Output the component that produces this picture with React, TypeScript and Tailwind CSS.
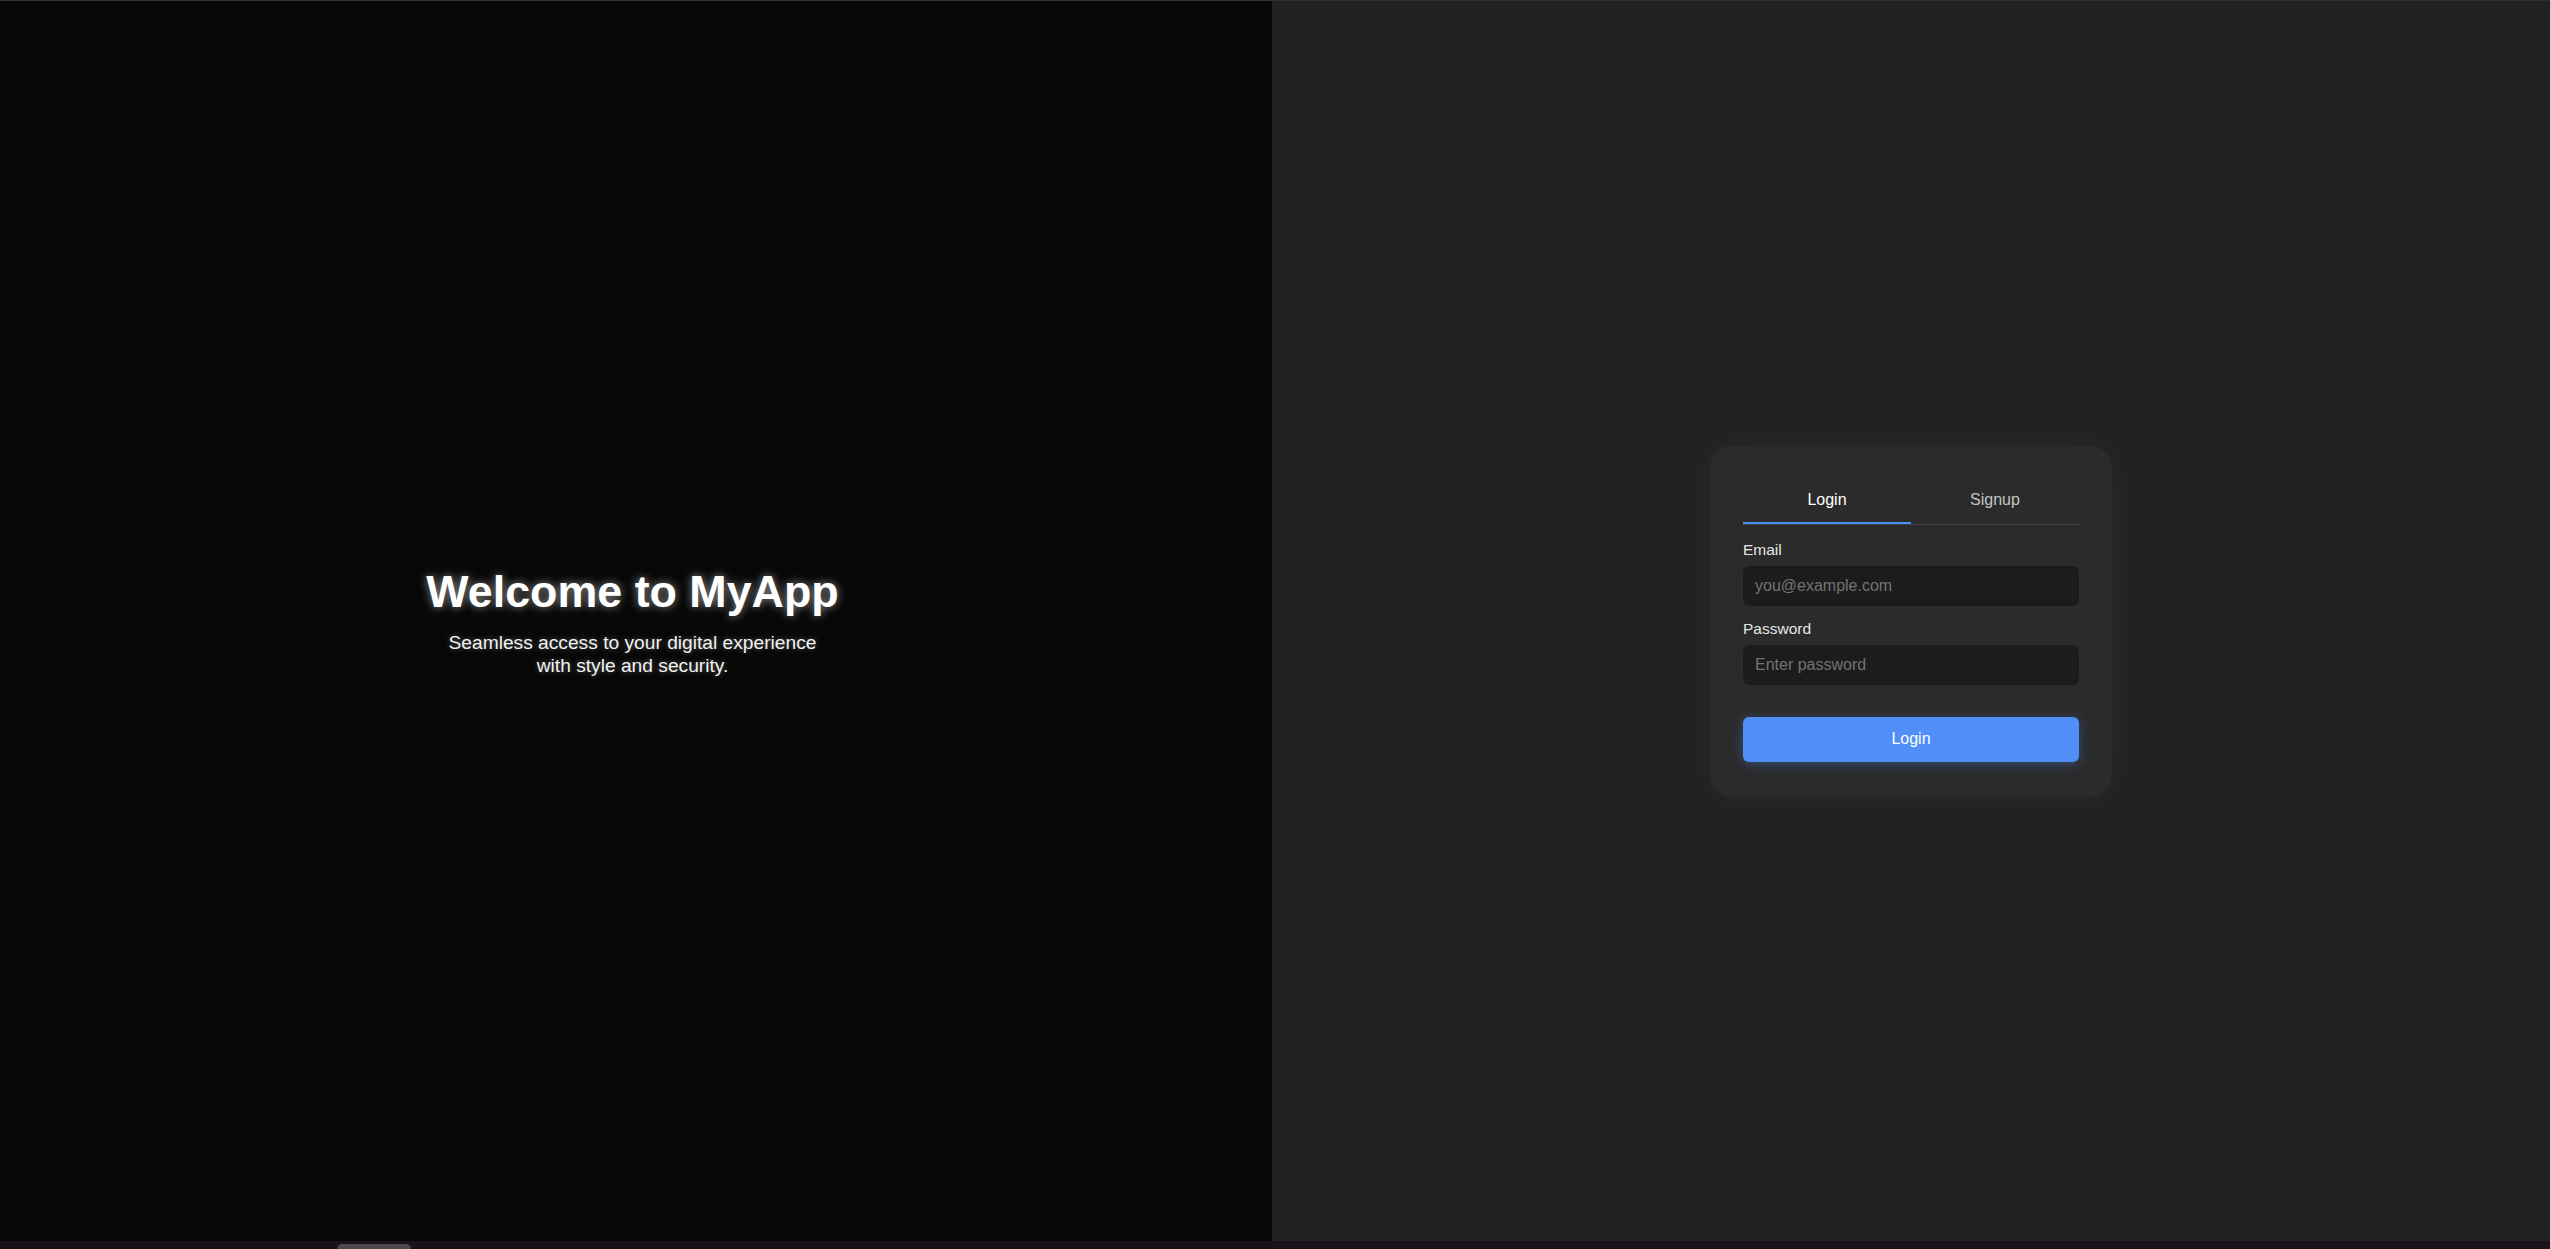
import React, { useState } from 'react';

const App: React.FC = () => {
    const [tab, setTab] = useState<'login' | 'signup'>('login');

    return (
        <div className="h-screen flex flex-col bg-[#070707] font-['Liberation_Sans',Arial,sans-serif] overflow-hidden">
            <div className="h-px bg-[#2f2f2f]"></div>
            <div className="flex-1 flex min-h-0">
                {/* intro side */}
                <div className="w-[1272px] bg-[#070707] flex flex-col items-center justify-center text-center text-white pr-[7px]">
                    <h1 className="text-[2.8rem] leading-[52px] font-bold mb-[14px] [text-shadow:0_0_10px_rgba(255,255,255,0.55)]">
                        Welcome to MyApp
                    </h1>
                    <p className="text-[1.2rem] leading-[23px] max-w-[400px] text-[#f2f2f2] [text-shadow:0_0_6px_rgba(255,255,255,0.35)]">
                        Seamless access to your digital experience with style and security.
                    </p>
                </div>

                {/* auth side */}
                <div className="flex-1 bg-[#212121] flex items-center justify-center">
                    <div className="w-[402px] bg-[#2b2b2b] rounded-[22px] pl-[33px] pr-[33px] pt-8 pb-[35px] shadow-[0_0_36px_rgba(255,255,255,0.05)]">
                        <div className="flex border-b border-[#454545]">
                            <button
                                onClick={() => setTab('login')}
                                className={`flex-1 py-3 text-base leading-5 border-b-2 ${tab === 'login' ? 'border-[#4d8ef7] text-white' : 'border-transparent text-[#c4c4c4]'}`}
                            >
                                Login
                            </button>
                            <button
                                onClick={() => setTab('signup')}
                                className={`flex-1 py-3 text-base leading-5 border-b-2 ${tab === 'signup' ? 'border-[#4d8ef7] text-white' : 'border-transparent text-[#c4c4c4]'}`}
                            >
                                Signup
                            </button>
                        </div>

                        <div className="mt-4">
                            <label className="block text-[15.5px] leading-[17px] text-[#e6e6e6] mb-2">Email</label>
                            <input
                                type="email"
                                placeholder="you@example.com"
                                className="w-full h-10 px-3 rounded-md bg-[#1c1c1c] text-base text-white placeholder:text-[#737373] outline-none"
                            />
                        </div>
                        <div className="mt-[14px]">
                            <label className="block text-[15.5px] leading-[17px] text-[#e6e6e6] mb-2">Password</label>
                            <input
                                type="password"
                                placeholder="Enter password"
                                className="w-full h-10 px-3 rounded-md bg-[#1c1c1c] text-base text-white placeholder:text-[#737373] outline-none"
                            />
                        </div>

                        <button className="mt-8 w-full h-[45px] rounded-md bg-[#4f8ff7] text-white text-base shadow-[0_2px_12px_rgba(79,143,247,0.35)]">
                            {tab === 'login' ? 'Login' : 'Signup'}
                        </button>
                    </div>
                </div>
            </div>
            <div className="h-2 bg-[#1b111a] flex items-end pl-[337px]">
                <div className="w-[74px] h-[5px] rounded-t-full bg-[#4a474a]"></div>
            </div>
        </div>
    );
};

export default App;
